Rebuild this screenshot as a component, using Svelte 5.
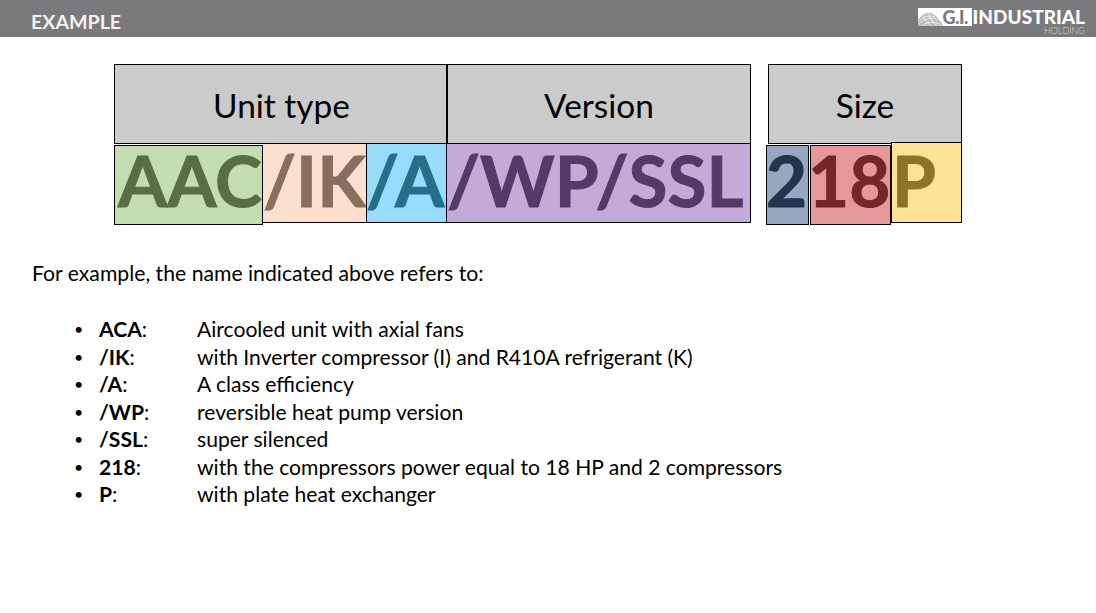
<script>
  const rows = [
    ['ACA', ':', 'Aircooled unit with axial fans'],
    ['/IK', ':', 'with Inverter compressor (I) and R410A refrigerant (K)'],
    ['/A', ':', 'A class efficiency'],
    ['/WP', ':', 'reversible heat pump version'],
    ['/SSL', ':', 'super silenced'],
    ['218', ':', 'with the compressors power equal to 18 HP and 2 compressors'],
    ['P', ':', 'with plate heat exchanger']
  ]
</script>

<div class="slide">
  <header>
    <span class="title">EXAMPLE</span>
    <div class="logo">
      <div class="mark">
        <svg width="25" height="18" viewBox="0 0 25 18">
          <path d="M0 12 C4 6 9 4 13 5 C18 7 22 12 25 18 L0 18 Z" fill="#bdbdbd" />
          <path d="M1 16 C7 10 14 9 20 12 M4 18 C10 13 16 13 23 17 M5 8 C7 12 10 15 13 18 M10 5 C12 10 15 14 19 18 M0 14 C6 8 12 7 17 9" fill="none" stroke="#f6f6f6" stroke-width="0.8" />
        </svg>
        <span class="gi">G.I.</span>
      </div>
      <div class="brand">
        <span class="industrial">INDUSTRIAL</span>
        <span class="holding">HOLDING</span>
      </div>
    </div>
  </header>

  <div class="diagram">
    <div class="heads">
      <div class="head unit">Unit type</div>
      <div class="head version">Version</div>
      <div class="head size">Size</div>
    </div>
    <div class="codes">
      <div class="code aac">AAC</div>
      <div class="code ik">/IK</div>
      <div class="code a"><span>/A</span></div>
      <div class="code wp">/WP/SSL</div>
      <div class="code two"><span>2</span></div>
      <div class="code eighteen"><span>18</span></div>
      <div class="code p">P</div>
    </div>
  </div>

  <p class="intro">For example, the name indicated above refers to:</p>

  <ul>
    {#each rows as [name, colon, text]}
      <li>
        <span class="name"><b>{name}</b>{colon}</span>
        <span>{text}</span>
      </li>
    {/each}
  </ul>
</div>

<style>
  :global(body) {
    margin: 0;
    background: #fff;
  }

  .slide {
    width: 1096px;
    height: 613px;
    overflow: hidden;
    font-family: Lato, 'Open Sans', sans-serif;
    color: #000;
  }

  header {
    height: 37px;
    background: #7a7a7c;
    display: flex;
    justify-content: space-between;
    padding: 0 11px 0 31px;
    box-sizing: border-box;
  }

  .title {
    font-size: 19.6px;
    font-weight: 700;
    color: #f2f2f2;
    line-height: 43px;
  }

  .logo {
    display: flex;
    align-items: flex-start;
    padding-top: 8px;
  }

  .mark {
    display: flex;
    align-items: center;
    width: 54px;
    height: 18px;
    background: #fff;
  }

  .gi {
    font-size: 18px;
    font-weight: 900;
    color: #77797b;
    letter-spacing: -0.5px;
  }

  .brand {
    display: flex;
    flex-direction: column;
    align-items: flex-end;
    margin-left: 1px;
  }

  .industrial {
    font-size: 19px;
    font-weight: 900;
    color: #fff;
    line-height: 18px;
  }

  .holding {
    font-size: 9px;
    color: #d6d6d6;
    line-height: 9px;
    font-weight: 300;
  }

  .diagram {
    margin: 27px 0 0 114px;
  }

  .heads {
    display: flex;
  }

  .head {
    height: 80px;
    box-sizing: border-box;
    background: #cbcbcb;
    border: 1px solid #000;
    display: flex;
    align-items: center;
    justify-content: center;
    font-size: 33.4px;
    padding-top: 2px;
  }

  .unit {
    width: 334px;
    border-right-width: 2px;
    padding-left: 2px;
  }

  .version {
    width: 303px;
    border-left: 0;
  }

  .size {
    width: 194px;
    margin-left: 17px;
  }

  .codes {
    display: flex;
    align-items: flex-start;
    margin-top: -1px;
  }

  .code {
    height: 80px;
    box-sizing: border-box;
    border: 1px solid #000;
    font-size: 71px;
    font-weight: 700;
    -webkit-text-stroke: 1px currentColor;
    line-height: 67px;
    white-space: nowrap;
  }

  .code span {
    display: block;
  }

  .aac {
    width: 149px;
    margin-top: 2px;
    background: #c4dcb2;
    color: #586e45;
    padding-left: 3px;
  }

  .ik {
    width: 103px;
    height: 79px;
    margin-top: 1px;
    padding-top: 2px;
    border-width: 0 0 1px;
    background: #fce0cf;
    color: #8a6e5c;
  }

  .a {
    width: 81px;
    height: 79px;
    margin-top: 1px;
    padding-top: 2px;
    border-width: 0 1px 1px;
    background: #98dcfb;
    color: #256f8b;
  }

  .a span {
    margin-left: -1px;
  }

  .wp {
    width: 304px;
    height: 79px;
    margin-top: 1px;
    padding-top: 2px;
    border-width: 0 1px 1px 0;
    background: #c4aad6;
    color: #543a68;
  }

  .two {
    width: 43px;
    margin: 2px 0 0 15px;
    background: #98a7bf;
    color: #24344f;
  }

  .two span {
    margin-left: -1px;
  }

  .eighteen {
    width: 81px;
    margin: 2px 0 0 1px;
    background: #e59898;
    color: #762626;
  }

  .eighteen span {
    margin-left: -3px;
  }

  .p {
    width: 71px;
    height: 81px;
    margin-top: -1px;
    padding-top: 3px;
    background: #fee296;
    color: #8f7325;
  }

  .intro {
    margin: 36px 0 0 32px;
    font-size: 21.2px;
    line-height: 24px;
  }

  ul {
    margin: 30px 0 0 73px;
    padding: 0;
    list-style: none;
  }

  li {
    display: flex;
    font-size: 21.1px;
    line-height: 27.5px;
    position: relative;
    padding-left: 26px;
  }

  li::before {
    content: '•';
    position: absolute;
    left: 1px;
    font-size: 16px;
  }

  .name {
    width: 98px;
  }
</style>
